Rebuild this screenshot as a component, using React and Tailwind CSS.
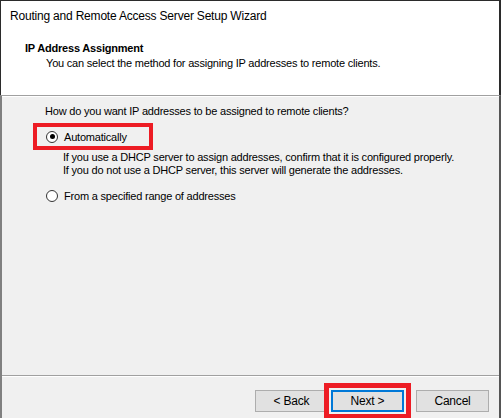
import React from 'react';

// Classic wizard page: white title + header band, gray body, etched separators.
const FONT = { fontFamily: '"Liberation Sans", Arial, sans-serif' };

function Radio({ checked }) {
  return (
    <span className="relative inline-flex h-[12px] w-[12px] shrink-0 items-center justify-center rounded-full border border-[#333] bg-white">
      {checked && <span className="h-[5px] w-[5px] rounded-full bg-black" />}
    </span>
  );
}

function Btn({ children, primary }) {
  return (
    <button
      type="button"
      className={
        'flex h-[22px] w-[73px] items-center justify-center bg-[#e1e1e1] text-[12px] tracking-[-0.2px] text-black ' +
        (primary
          ? 'border-2 border-[#0078d7] outline-[5px] outline-solid outline-[#ed1c24] outline-offset-[2px]'
          : 'border border-[#adadad]')
      }
    >
      {children}
    </button>
  );
}

export default function App() {
  return (
    <div className="flex h-[418px] w-[501px] flex-col overflow-hidden border-t border-[#2b2b2b] bg-white text-black" style={FONT}>
      {/* Title bar */}
      <div className="flex h-[30px] items-center border-l border-r-2 border-[#2b2b2b] pl-[9px] text-[12px] tracking-[-0.2px]">
        Routing and Remote Access Server Setup Wizard
      </div>

      {/* Header */}
      <div className="h-[64px] border-l border-r-2 border-[#2b2b2b] pt-[10px] text-[11px] leading-[14px] tracking-[-0.2px]">
        <div className="pl-[24px] font-bold">IP Address Assignment</div>
        <div className="mt-[1px] pl-[45px]">You can select the method for assigning IP addresses to remote clients.</div>
      </div>

      {/* Body */}
      <div className="flex flex-1 flex-col border-l-2 border-r-2 border-t border-l-[#808080] border-r-[#555] border-t-[#a0a0a0] bg-[#f0f0f0] text-[11px] leading-[14px] tracking-[-0.2px]">
        <div className="flex-1 border-t border-white">
          <div className="pl-[43px] pt-[7px]">How do you want IP addresses to be assigned to remote clients?</div>

          <div className="ml-[35px] mt-[9px] flex h-[19px] w-[112px] items-center gap-[6px] pl-[9px] outline-4 outline-solid outline-[#ed1c24]">
            <Radio checked />
            <span>Automatically</span>
          </div>

          <div className="mt-[5px] pl-[61px] leading-[13px]">
            <div>If you use a DHCP server to assign addresses, confirm that it is configured properly.</div>
            <div>If you do not use a DHCP server, this server will generate the addresses.</div>
          </div>

          <div className="mt-[12px] flex items-center gap-[6px] pl-[44px]">
            <Radio />
            <span>From a specified range of addresses</span>
          </div>
        </div>

        {/* Footer */}
        <div className="h-[43px] border-t border-[#a0a0a0]">
          <div className="flex border-t border-white pr-[10px] pt-[13px]">
            <div className="ml-auto flex">
              <div className="mr-[3px]"><Btn>&lt; Back</Btn></div>
              <Btn primary>Next &gt;</Btn>
              <div className="ml-[12px]"><Btn>Cancel</Btn></div>
            </div>
          </div>
        </div>
      </div>
    </div>
  );
}
